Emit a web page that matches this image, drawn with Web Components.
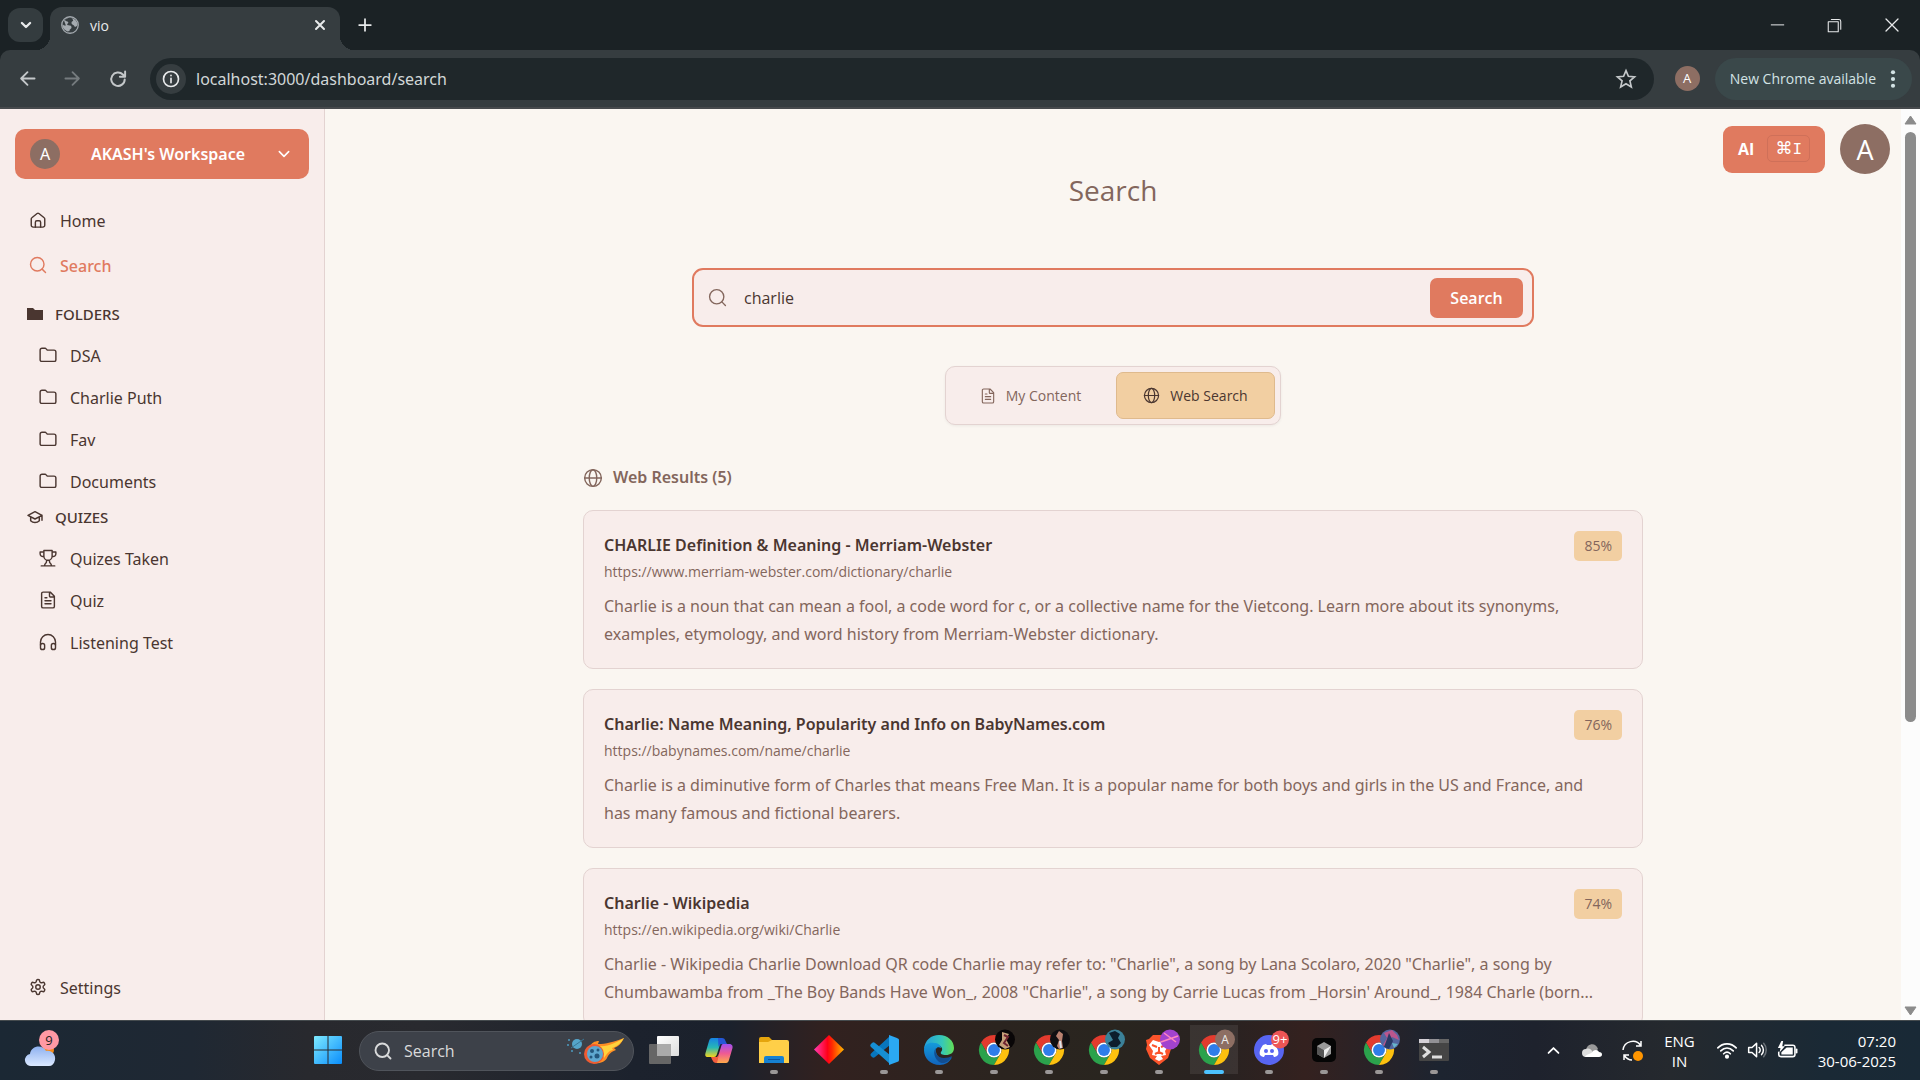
<!DOCTYPE html>
<html lang="en">
<head>
<meta charset="utf-8">
<title>vio</title>
<style>
  html, body { height: 100%; }
  body {
    margin: 0;
    overflow: hidden;
    font-family: "Open Sans", "Noto Sans", sans-serif;
    font-size: 16px;
    --ink: #4a3630;
    --muted: #83665c;
    --accent: #e07a5f;
    --accent-soft: #f2cfa2;
    --panel: #f8edeb;
    --page: #faf6f1;
    --line: #e3d3d1;
    --avatar: #8d6e63;
  }
</style>
</head>
<body>
<vio-desktop>
  <chrome-tabs slot="browser"></chrome-tabs>
  <chrome-toolbar slot="browser" url="localhost:3000/dashboard/search"></chrome-toolbar>
  <vio-sidebar slot="page"></vio-sidebar>
  <vio-search slot="page" query="charlie">
    <vio-result score="85%">
      <span slot="title">CHARLIE Definition &amp; Meaning - Merriam-Webster</span>
      <span slot="url">https://www.merriam-webster.com/dictionary/charlie</span>
      Charlie is a noun that can mean a fool, a code word for c, or a collective name for the Vietcong. Learn more about its synonyms, examples, etymology, and word history from Merriam-Webster dictionary.
    </vio-result>
    <vio-result score="76%">
      <span slot="title">Charlie: Name Meaning, Popularity and Info on BabyNames.com</span>
      <span slot="url">https://babynames.com/name/charlie</span>
      Charlie is a diminutive form of Charles that means Free Man. It is a popular name for both boys and girls in the US and France, and has many famous and fictional bearers.
    </vio-result>
    <vio-result score="74%">
      <span slot="title">Charlie - Wikipedia</span>
      <span slot="url">https://en.wikipedia.org/wiki/Charlie</span>
      Charlie - Wikipedia Charlie Download QR code Charlie may refer to: "Charlie", a song by Lana Scolaro, 2020 "Charlie", a song by Chumbawamba from _The Boy Bands Have Won_, 2008 "Charlie", a song by Carrie Lucas from _Horsin' Around_, 1984 Charle (born...
    </vio-result>
  </vio-search>
  <page-scrollbar slot="page"></page-scrollbar>
  <win-taskbar slot="taskbar"></win-taskbar>
</vio-desktop>

<script>
(function () {
  'use strict';

  function component(selector, style, template, setup) {
    var $template = document.createElement('template');
    $template.innerHTML = '<style>:host,*{box-sizing:border-box}' + style + '</style>' + template;
    customElements.define(selector, class extends HTMLElement {
      connectedCallback() {
        if (this.shadowRoot) return;
        this.attachShadow({ mode: 'open' });
        this.shadowRoot.appendChild(document.importNode($template.content, true));
        if (setup) setup.call(this, this.shadowRoot);
      }
    });
  }

  // 24x24 line icons
  var icons = {
    home: '<path d="M3 10.6a2 2 0 0 1 .8-1.6l7-5.6a2 2 0 0 1 2.4 0l7 5.6a2 2 0 0 1 .8 1.6V19a2.5 2.5 0 0 1-2.5 2.5h-13A2.5 2.5 0 0 1 3 19z"/><path d="M8.5 21.5V15a2 2 0 0 1 2-2h3a2 2 0 0 1 2 2v6.5"/>',
    search: '<circle cx="11" cy="11" r="9"/><path d="m17.5 17.5 4.500 4.500"/>',
    folder: '<path d="M1.500 5.500A2.500 2.500 0 0 1 4 3h4a2 2 0 0 1 1.600.8L11 5.500h9A2.500 2.500 0 0 1 22.500 8v10.500a2 2 0 0 1-2 2h-17a2 2 0 0 1-2-2z"/>',
    folderSolid: '<path fill="currentColor" stroke="none" d="M0 3h9l3 3h12v15H0z"/>',
    cap: '<path d="M12 4 1.500 9.500 12 15l10.500-5.500zM22.500 9.500V17M5.500 12v5.500c3.500 3.600 9.500 3.600 13 0V12"/>',
    trophy: '<path d="M6.500 2h11v7.500a5.500 5.500 0 0 1-11 0zM6.500 4H1.500v2.300A3.700 3.700 0 0 0 6 10M17.500 4h5v2.300a3.700 3.700 0 0 1-4.500 3.700M10 15v2c0 2-2.500 2-2.500 5M14 15v2c0 2 2.500 2 2.500 5M3 22.500h18"/>',
    doc: '<path d="M15 1.500H5.500A2 2 0 0 0 3.500 3.500v17a2 2 0 0 0 2 2h13a2 2 0 0 0 2-2V7zM14 2v5a1 1 0 0 0 1 1h5M8 9h2.500M8 13h8M8 17h8"/>',
    phones: '<path d="M2 16v-4a10 10 0 0 1 20 0v4"/><rect x="2" y="14" width="5.500" height="8" rx="2.500"/><rect x="16.500" y="14" width="5.500" height="8" rx="2.500"/>',
    gear: '<path d="M12.220 2h-.440a2 2 0 0 0-2 2v.180a2 2 0 0 1-1 1.730l-.430.250a2 2 0 0 1-2 0l-.150-.080a2 2 0 0 0-2.730.730l-.220.380a2 2 0 0 0 .730 2.730l.150.100a2 2 0 0 1 1 1.720v.510a2 2 0 0 1-1 1.740l-.150.090a2 2 0 0 0-.730 2.730l.220.380a2 2 0 0 0 2.730.730l.150-.080a2 2 0 0 1 2 0l.430.250a2 2 0 0 1 1 1.730V20a2 2 0 0 0 2 2h.440a2 2 0 0 0 2-2v-.180a2 2 0 0 1 1-1.730l.430-.250a2 2 0 0 1 2 0l.150.080a2 2 0 0 0 2.730-.730l.220-.390a2 2 0 0 0-.730-2.730l-.150-.080a2 2 0 0 1-1-1.740v-.500a2 2 0 0 1 1-1.740l.150-.090a2 2 0 0 0 .730-2.730l-.220-.380a2 2 0 0 0-2.730-.730l-.150.080a2 2 0 0 1-2 0l-.430-.250a2 2 0 0 1-1-1.730V4a2 2 0 0 0-2-2z"/><circle cx="12" cy="12" r="3"/>',
    globe: '<circle cx="12" cy="12" r="10"/><ellipse cx="12" cy="12" rx="4.500" ry="10"/><path d="M2 12h20"/>',
    chevron: '<path d="m5 8.500 7 7 7-7"/>',
    up: '<path d="m5 15.500 7-7 7 7"/>',
    back: '<path d="M22 12H3M12 3l-9 9 9 9"/>',
    forward: '<path d="M2 12h19M12 3l9 9-9 9"/>',
    reload: '<path d="M21 12.500A9 9 0 1 1 18.500 6L21 8.500M21.500 2v7h-7"/>',
    info: '<circle cx="12" cy="12" r="10"/><path d="M12 11v6M12 7v.500"/>',
    star: '<path stroke-linejoin="miter" d="m12 2 2.900 6.800 7.400.6-5.600 4.900 1.700 7.200-6.400-3.800-6.400 3.800 1.700-7.200-5.600-4.900 7.400-.6z"/>',
    cross: '<path d="m4 4 16 16M20 4 4 20"/>',
    plus: '<path d="M12 2v20M2 12h20"/>',
    minus: '<path d="M2 11h20"/>',
    restore: '<rect x="2" y="6" width="16" height="16"/><path d="M7 2.500h12a3 3 0 0 1 3 3V18"/>',
    world: '<circle cx="12" cy="12" r="11"/><path fill="currentColor" stroke="none" d="M11 1.500c-3 1-5 2-5.500 4 1 2 3 .5 4 2.500s-2 2-1 4c2 1 6 0 5.500 3.500-.5 2-3 1.500-2.500 4.500l-3 .5C3 18 1.500 14 2 11c1.500 1 3 2.500 4.500 1.500L4 6zM14 3c4 0 8 4 8 9-1 2-3 3-4 2-1-3-4-2-4-5 0-2 3-2 2-4z"/>',
    dots: '<g fill="currentColor" stroke="none"><circle cx="12" cy="3" r="2.800"/><circle cx="12" cy="12" r="2.800"/><circle cx="12" cy="21" r="2.800"/></g>',
    wifi: '<path d="M1 9.500c6-6.500 16-6.500 22 0M4.500 13c4.500-4.500 10.500-4.500 15 0M8 16.500c2.500-2.300 5.500-2.300 8 0"/><circle cx="12" cy="20" r="1.500" fill="currentColor"/>',
    volume: '<path d="M2 9v6h4l5.500 5V4L6 9zM14.500 9a4 4 0 0 1 0 6M17.500 6.500a8 8 0 0 1 0 11"/><path opacity=".35" d="M20 4a12 12 0 0 1 0 16"/>',
    battery: '<path d="M9 6h9a2.500 2.500 0 0 1 2.500 2.500v8A2.500 2.500 0 0 1 18 19H4.500A2.500 2.500 0 0 1 2 16.500V14M22.500 10.500v4"/><path fill="currentColor" stroke="none" d="M11 8.500h7v8H5V14zM5 1 1 9h3l-1 5 6-7H6l1-6z"/>'
  };

  function svgIcon(name, size, weight) {
    return '<svg aria-hidden="true" width="' + size + '" height="' + size + '" viewBox="0 0 24 24" fill="none" stroke="currentColor" stroke-width="' +
      weight + '" stroke-linecap="round" stroke-linejoin="round">' + icons[name] + '</svg>';
  }

  component('ui-icon', `
    :host { display: block; flex: none; }
    svg { display: block; overflow: visible; }
  `, '', function (root) {
    root.innerHTML += svgIcon(this.getAttribute('name'), this.getAttribute('size') || 20, this.getAttribute('weight') || 1.7);
  });

  component('user-avatar', `
    :host { display: flex; flex: none; align-items: center; justify-content: center; width: 30px; height: 30px; border-radius: 50%; background: var(--avatar); color: #fff; font-size: 16px; line-height: 1; }
  `, '<slot></slot>');

  component('vio-desktop', `
    :host { display: flex; flex-direction: column; height: 100vh; background: #1b2225; }
    .page { display: flex; flex: 1; min-height: 0; overflow: hidden; background: var(--page); }
  `, '<slot name="browser"></slot><main class="page"><slot name="page"></slot></main><slot name="taskbar"></slot>');

  component('chrome-tabs', `
    :host { display: flex; flex: none; align-items: center; height: 50px; padding-left: 8px; background: #1b2225; color: #e8eaeb; }
    button { display: flex; align-items: center; justify-content: center; border: 0; padding: 0; background: none; color: inherit; font: inherit; }
    .search { width: 35px; height: 34px; border-radius: 12px; background: #343c3f; }
    .tab { display: flex; align-items: center; gap: 11px; align-self: flex-end; position: relative; width: 290px; height: 43px; margin-left: 7px; padding: 0 14px 7px 11px; border-radius: 12px 12px 0 0; background: #363d40; font-size: 14px; }
    .tab::before, .tab::after { content: ""; position: absolute; bottom: 0; width: 14px; height: 14px; }
    .tab::before { right: 100%; background: radial-gradient(circle at 0 0, transparent 14px, #363d40 14px); }
    .tab::after { left: 100%; background: radial-gradient(circle at 100% 0, transparent 14px, #363d40 14px); }
    .tab span { flex: 1; }
    .tab ui-icon { color: #a5abb0; }
    .tab button ui-icon { color: #e8eaeb; }
    .new { width: 34px; margin-left: 8px; }
    .window { display: flex; align-self: stretch; margin-left: auto; }
    .window button { width: 57px; }
  `, `
    <button class="search" aria-label="Search tabs"><ui-icon name="chevron" size="14" weight="4"></ui-icon></button>
    <div class="tab">
      <ui-icon name="world" size="18"></ui-icon><span>vio</span>
      <button aria-label="Close tab"><ui-icon name="cross" size="12" weight="4"></ui-icon></button>
    </div>
    <button class="new" aria-label="New tab"><ui-icon name="plus" size="14" weight="3"></ui-icon></button>
    <div class="window">
      <button aria-label="Minimize"><ui-icon name="minus" size="15" weight="1.6"></ui-icon></button>
      <button aria-label="Restore"><ui-icon name="restore" size="15" weight="1.7"></ui-icon></button>
      <button aria-label="Close"><ui-icon name="cross" size="18" weight="1.7"></ui-icon></button>
    </div>
  `);

  component('chrome-toolbar', `
    :host { display: flex; flex: none; align-items: center; height: 59px; padding: 0 8px 0 5px; background: #363d40; border-bottom: 2px solid #474a4d; border-radius: 10px 10px 0 0; color: #c4c8ca; }
    button { display: flex; align-items: center; justify-content: center; border: 0; padding: 0; background: none; color: inherit; font: inherit; }
    .nav { width: 45px; height: 40px; }
    .nav[disabled] { color: #757b7e; }
    .address { display: flex; flex: 1; align-items: center; height: 42px; margin-left: 10px; padding: 0 18px 0 6px; border-radius: 21px; background: #1f272a; }
    .info { width: 30px; height: 30px; border-radius: 50%; background: #363d40; color: #e8eaeb; }
    input { flex: 1; min-width: 0; margin-left: 8px; padding: 1px 2px 0; border: 0; outline: 0; background: none; color: #d2d7d8; font: 16px "Noto Sans", sans-serif; }
    user-avatar { width: 25px; height: 25px; margin: 0 15px 0 21px; font-size: 13px; }
    .update { gap: 8px; height: 42px; padding: 0 10px 0 15px; border-radius: 21px; background: #3a484a; color: #d3e3e5; font-size: 14px; }
  `, `
    <button class="nav" aria-label="Back"><ui-icon name="back" size="17" weight="2.6"></ui-icon></button>
    <button class="nav" aria-label="Forward" disabled><ui-icon name="forward" size="17" weight="2.6"></ui-icon></button>
    <button class="nav" aria-label="Reload"><ui-icon name="reload" size="18" weight="2.6"></ui-icon></button>
    <div class="address">
      <button class="info" aria-label="Site information"><ui-icon name="info" size="18" weight="2.2"></ui-icon></button>
      <input aria-label="Address bar" spellcheck="false">
      <button aria-label="Bookmark this tab"><ui-icon name="star" size="20" weight="2"></ui-icon></button>
    </div>
    <user-avatar>A</user-avatar>
    <button class="update">New Chrome available <ui-icon name="dots" size="18"></ui-icon></button>
  `, function (root) {
    root.querySelector('input').value = this.getAttribute('url');
  });

  component('side-link', `
    :host { display: block; }
    a { display: flex; align-items: center; gap: 13px; color: inherit; text-decoration: none; line-height: 42px; }
    svg { display: block; flex: none; margin-bottom: 3px; overflow: visible; }
    :host([current]) { color: var(--accent); font-weight: 500; }
  `, '<a href="#"><slot></slot></a>', function (root) {
    root.querySelector('a').insertAdjacentHTML('afterbegin', svgIcon(this.getAttribute('icon'), 18, 1.9));
  });

  component('vio-sidebar', `
    :host { display: flex; flex: none; flex-direction: column; width: 325px; padding: 20px 15px 11px; background: var(--panel); border-right: 1px solid var(--line); color: var(--ink); font-family: "Noto Sans", sans-serif; }
    .workspace { display: flex; flex: none; align-items: center; height: 50px; padding: 0 17px 0 15px; border: 0; border-radius: 10px; background: var(--accent); color: #fff; font: inherit; font-weight: 600; }
    .workspace span { flex: 1; text-align: center; }
    user-avatar { font-weight: 400; }
    nav { display: flex; flex: 1; flex-direction: column; padding: 21px 12px 0; }
    h2 { display: flex; align-items: center; gap: 12px; height: 28px; margin: 0 0 7px; font-size: 15px; font-weight: 500; }
    .top { display: grid; gap: 3px; margin-bottom: 13px; padding: 0 2px; }
    .group { padding: 0 12px; }
    .settings { margin-top: auto; padding: 0 2px; }
  `, `
    <button class="workspace"><user-avatar>A</user-avatar><span>AKASH's Workspace</span><ui-icon name="chevron" size="16" weight="2.4"></ui-icon></button>
    <nav>
      <div class="top">
        <side-link icon="home">Home</side-link>
        <side-link icon="search" current>Search</side-link>
      </div>
      <h2><ui-icon name="folderSolid" size="16"></ui-icon>FOLDERS</h2>
      <div class="group">
        <side-link icon="folder">DSA</side-link>
        <side-link icon="folder">Charlie Puth</side-link>
        <side-link icon="folder">Fav</side-link>
        <side-link icon="folder">Documents</side-link>
      </div>
      <h2><ui-icon name="cap" size="16" weight="2.2"></ui-icon>QUIZES</h2>
      <div class="group">
        <side-link icon="trophy">Quizes Taken</side-link>
        <side-link icon="doc">Quiz</side-link>
        <side-link icon="phones">Listening Test</side-link>
      </div>
      <side-link class="settings" icon="gear">Settings</side-link>
    </nav>
  `);

  component('vio-search', `
    :host { display: flex; flex: 1; flex-direction: column; align-items: center; min-width: 0; color: var(--muted); }
    header, form, .switch, section { flex: none; }
    button { border: 0; font: inherit; }
    header { display: grid; grid-template-columns: 1fr auto 1fr; align-self: stretch; padding: 15px 11px 0; }
    h1 { grid-column: 2; margin: 0; padding-top: 46px; font-size: 28px; font-weight: 400; line-height: 40px; }
    .actions { display: flex; align-items: center; justify-self: end; gap: 15px; height: 50px; }
    .ai { display: flex; align-items: center; gap: 13px; height: 47px; padding: 0 15px; border-radius: 9px; background: var(--accent); color: #fff; font-size: 16px; font-weight: 700; }
    kbd { height: 27px; margin-bottom: 2px; padding: 0 7px; border: 1px solid #cf7059; border-radius: 5px; font: 16px/24px "Liberation Mono", monospace; }
    kbd span { font-family: "DejaVu Sans", sans-serif; font-size: 17px; }
    .actions user-avatar { width: 50px; height: 50px; font-size: 27px; }
    form { display: flex; align-items: center; width: min(842px, 90%); height: 59px; margin-top: 58px; padding: 0 9px 0 14px; border: 2px solid var(--accent); border-radius: 11px; background: var(--panel); }
    input { flex: 1; min-width: 0; margin: 0 17px; padding: 0; border: 0; outline: 0; background: none; color: var(--ink); font: inherit; }
    form button { width: 93px; height: 40px; padding: 0; border-radius: 7px; background: var(--accent); color: #fff; font-weight: 600; }
    .switch { display: flex; height: 59px; margin-top: 39px; padding: 5px; border: 1px solid var(--line); border-radius: 10px; background: var(--panel); box-shadow: 0 1px 3px rgba(0, 0, 0, .06); }
    .switch button { display: flex; align-items: center; justify-content: center; gap: 10px; width: 159px; padding: 0 12px; border: 1px solid transparent; border-radius: 7px; background: none; color: var(--muted); font-size: 14px; }
    .switch button[aria-pressed="true"] { border-color: #dfba8d; background: var(--accent-soft); color: var(--ink); }
    .switch button + button { margin-left: 6px; }
    section { display: flex; flex-direction: column; gap: 20px; width: min(1060px, 90%); margin-top: 40px; }
    h2 { display: flex; align-items: center; gap: 10px; margin: 0; font: 600 16px/25px "Noto Sans", sans-serif; }
  `, `
    <header>
      <h1>Search</h1>
      <div class="actions"><button class="ai">AI <kbd><span>⌘</span>I</kbd></button><user-avatar>A</user-avatar></div>
    </header>
    <form>
      <ui-icon name="search" size="19"></ui-icon>
      <input type="text" aria-label="Search">
      <button type="button">Search</button>
    </form>
    <div class="switch">
      <button aria-pressed="false"><ui-icon name="doc" size="16"></ui-icon>My Content</button>
      <button aria-pressed="true"><ui-icon name="globe" size="17"></ui-icon>Web Search</button>
    </div>
    <section>
      <h2><ui-icon name="globe" size="20"></ui-icon>Web Results (5)</h2>
      <slot></slot>
    </section>
  `, function (root) {
    root.querySelector('input').value = this.getAttribute('query');
  });

  component('vio-result', `
    :host { display: grid; grid-template-columns: 1fr auto; padding: 20px; border: 1px solid var(--line); border-radius: 10px; background: var(--panel); }
    h3 { margin: 0; color: var(--ink); font: 600 16px/28px "Noto Sans", sans-serif; }
    a { display: block; color: inherit; font-size: 14px; line-height: 25px; text-decoration: none; }
    p { display: -webkit-box; grid-column: 1 / 3; margin: 8px 12px 0 0; overflow: hidden; font: 16px/28px "Noto Sans", sans-serif; -webkit-box-orient: vertical; -webkit-line-clamp: 2; }
    .score { align-self: start; padding: 0 10px; border-radius: 5px; background: var(--accent-soft); font-size: 14px; line-height: 30px; }
  `, `
    <div><h3><slot name="title"></slot></h3><a href="#"><slot name="url"></slot></a></div>
    <span class="score"></span>
    <p><slot></slot></p>
  `, function (root) {
    root.querySelector('.score').textContent = this.getAttribute('score');
  });

  component('page-scrollbar', `
    :host { display: flex; flex: none; flex-direction: column; align-items: center; width: 19px; padding: 6px 0 4px; background: #fcfcfc; }
    .track { flex: 1; width: 11px; margin: 7px 0; }
    .thumb { height: 68%; border-radius: 6px; background: #8b8b8b; }
    svg { fill: #8b8b8b; stroke: #8b8b8b; stroke-linejoin: round; }
  `, `
    <svg width="13" height="10"><path d="M6.500 1 12 9H1z"/></svg>
    <div class="track"><div class="thumb"></div></div>
    <svg width="13" height="10"><path d="M6.500 9 12 1H1z"/></svg>
  `);

  // Taskbar pictures, each on a 30x30 box
  function chromeLogo(badge) {
    return '<g transform="scale(.625)"><path fill="#e33b2e" d="M24 12h20.800A24 24 0 0 0 3.200 12l10.400 18A12 12 0 0 1 24 12z"/>' +
      '<path fill="#2ba24c" d="M13.600 30 3.200 12A24 24 0 0 0 24 48l10.400-18a12 12 0 0 1-20.800 0z"/>' +
      '<path fill="#fdc10f" d="M34.400 30 24 48a24 24 0 0 0 20.800-36H24a12 12 0 0 1 10.400 18z"/>' +
      '<circle cx="24" cy="24" r="12" fill="#fff"/><circle cx="24" cy="24" r="9.500" fill="#2f7de9"/></g>' + badge;
  }
  var pictures = {
    start: '<defs><linearGradient id="w" x2="1" y2="1"><stop stop-color="#7eeaff"/><stop offset="1" stop-color="#0a8dfb"/></linearGradient></defs><path fill="url(#w)" d="M1 2a1 1 0 0 1 1-1h12.500v13.500H1zM15.500 1H28a1 1 0 0 1 1 1v12.500H15.500zM1 15.500h13.500V29H2a1 1 0 0 1-1-1zM15.500 15.500H29V28a1 1 0 0 1-1 1H15.500z"/>',
    tasks: '<defs><linearGradient id="t" x2="1" y2="1"><stop stop-color="#fff"/><stop offset="1" stop-color="#ddd"/></linearGradient></defs><rect y="9" width="22" height="20" rx="1" fill="#666"/><rect x="8" y="1" width="22" height="20" rx="1" fill="url(#t)"/><path fill="#aaa" d="M8 9h14v12H8z"/>',
    copilot: '<defs><linearGradient id="c1" x2="0" y2="1"><stop stop-color="#1683e5"/><stop offset=".5" stop-color="#27b7b5"/><stop offset="1" stop-color="#f4d51c"/></linearGradient><linearGradient id="c2" x2="0" y2="1"><stop stop-color="#a04ff0"/><stop offset=".5" stop-color="#ef5b93"/><stop offset="1" stop-color="#ffab4a"/></linearGradient></defs><path fill="url(#c1)" d="M8 3h10l-5 16c-1 3-2 3-4 3H4c-3 0-3-2-2.500-4L5 6c.5-2 1.500-3 3-3z"/><path fill="#2457d6" d="M14 3h4c2 0 3 1 3.500 3L23 9h-5c-2 0-3 1-3.500 3z"/><path fill="url(#c2)" d="M19 9h6c3 0 4 2 3.500 4L25 25c-.5 2-1.500 3-3 3H12l5-16c.5-2 1-3 2-3z"/><path fill="#f25d3d" d="M7 22h6l2-3-2 9c-3 0-4-1-6-6z"/>',
    files: '<path fill="#e5a50d" d="M0 4a2 2 0 0 1 2-2h8l3 3v5H0z"/><path fill="#ffcf48" d="M0 7h9l4-2h15a2 2 0 0 1 2 2v21H0z"/><path fill="#1681d2" d="M5 28v-5a2 2 0 0 1 2-2h16a2 2 0 0 1 2 2v5z"/><path fill="#0d569f" d="M9 24h12v1H9z"/>',
    diamond: '<defs><linearGradient id="d"><stop stop-color="#ff3cb5"/><stop offset=".45" stop-color="#ff0018"/><stop offset=".6" stop-color="#ff2a00"/><stop offset="1" stop-color="#ffb700"/></linearGradient></defs><path fill="url(#d)" d="M15 0l15 14.500L15 29 0 14.500z"/>',
    code: '<path fill="#0876bd" d="M21 1 2.500 18c-1 1-1.500 2-.5 3l1 1c1 1 2 1 3 0L21 10z"/><path fill="#168fd4" d="m2 9 1-1c1-1 2-1 3 0l15 12v9L2 12c-1-1-1-2 0-3z"/><path fill="#2ba8f3" d="M20 0l8 3c1 .5 2 1 2 2v20c0 1-1 2-2 2l-8 3z"/>',
    edge: '<defs><linearGradient id="e1" x2="1"><stop stop-color="#259fdc"/><stop offset=".6" stop-color="#35c7ba"/><stop offset="1" stop-color="#62df55"/></linearGradient><linearGradient id="e2" x2="0" y2="1"><stop stop-color="#149bdb"/><stop offset="1" stop-color="#1163bc"/></linearGradient></defs><path fill="url(#e1)" d="M0 14C1 5 7 0 15 0c9 0 15 6 15 13 0 5-4 7-8 7-4 0-6-1-5-3 3-3 0-7-4-7C7 8 2 10 0 14z"/><path fill="url(#e2)" d="M0 15C0 9 6 7 10 8c4 0 7 2 7 5-3-2-6 0-5 4 1 5 5 7 10 7 3 0 5-1 6-2-2 5-7 8-12 8C6 30 0 23 0 15z"/><path fill="#124d91" d="M12 13c-2 5 2 10 8 10 3 0 6-1 8-2-3 7-10 9-14 5-4-4-5-10-2-13z"/>',
    chrome1: chromeLogo('<circle cx="26" cy="4.500" r="10" fill="#090607"/><path d="m23-3 7 2-3 5 4 8-5 2-6-4 3-5z" fill="#c6a07a"/><path d="m25 0 4 2-4 6 4 3" stroke="#702430" stroke-width="2" fill="none"/>'),
    chrome2: chromeLogo('<circle cx="26" cy="4.500" r="10" fill="#100f12"/><path d="m25-4 4 3-1 7 1 7-4 1-2-3 2-6-3-4z" fill="#b98170"/><path d="m26 6 1 7" stroke="#dee5ed" stroke-width="2"/>'),
    chrome3: chromeLogo('<circle cx="26" cy="4.500" r="10" fill="#3b8198"/><path d="m20-2 6-2 5 3-2 4 3 5-4 4h-6l-3-4 5-3z" fill="#0c1d2c"/>'),
    brave: '<g transform="translate(2)"><path fill="#fb542b" d="m7 0-4 4-3 1 1 5-1 4 4 9 9 7 9-7 3-9-1-4 1-5-3-1-4-4z"/><path fill="#fff" d="m7 5 6 2 6-2 4 5-4 6 1 4-5 1 2 3-4 2-4-2 2-3-5-1 1-4-4-6z"/><path stroke="#fb542b" stroke-width="2" fill="none" d="m6 10 5 2M20 10l-5 2M13 12v7M9 19l4-2 4 2"/></g><circle cx="26" cy="4.500" r="10" fill="#a243cf"/><path stroke="#ff87bf" stroke-width="1.500" d="m17 7 17-6M20-2l12 9"/>',
    chrome4: chromeLogo('<circle cx="26" cy="4.500" r="10" fill="#8d6e63"/><text x="26" y="9" fill="#eee" font-size="12" text-anchor="middle">A</text>'),
    discord: '<circle cx="15" cy="15" r="15" fill="#5865f2"/><path fill="#fff" d="M9 10c2-1 3-1 3-1l1 1h4l1-1s1 0 3 1c3 4 4 7 3 10-2 2-4 2-4 2l-1-2h-8l-1 2s-2 0-4-2c-1-3 0-6 3-10z"/><circle cx="12" cy="16" r="2" fill="#5865f2"/><circle cx="18" cy="16" r="2" fill="#5865f2"/><circle cx="26" cy="4.500" r="9" fill="#ed5555"/><text x="26" y="9" fill="#fff" font-size="13" text-anchor="middle">9+</text>',
    cursor: '<rect x="3" y="3" width="24" height="24" rx="5" fill="#050505"/><path fill="#999" d="m15 7 7 4v8l-7 4-7-4v-8z"/><path fill="#eee" d="m8 11 7 4 7-4-7 12v-7z"/><path fill="#555" d="m8 11 7 4v8l-7-4z"/>',
    chrome5: chromeLogo('<circle cx="26" cy="4.500" r="10" fill="#5466a0"/><path d="m20-2 8-3 5 5 2 5-7-3-5 10-4-2 4-7z" fill="#bb568d"/><path d="m25-2 4 8-4 8-5-2 3-8z" fill="#293a66"/><path d="m28 8 6 1-4 4z" fill="#67b6cc"/>'),
    terminal: '<rect y="4" width="30" height="22" rx="1" fill="#454545"/><path fill="#d4d0d6" d="M0 4h10v4H0z"/><path fill="#929195" d="M10 4h10v4H10z"/><path fill="#666" d="M20 4h10v4H20z"/><path fill="none" stroke="#dedede" stroke-width="3" d="m4 12 6 5-6 5M13 22h10"/>'
  };

  component('task-app', `
    :host { display: flex; flex: none; flex-direction: column; align-items: center; width: 55px; height: 59px; padding-top: 14px; }
    button { display: block; padding: 0; border: 0; background: none; font: inherit; }
    svg { display: block; overflow: visible; }
    :host([running])::after { content: ""; width: 8px; height: 4px; margin-top: 5px; border-radius: 2px; background: #9a9797; }
    :host([active]) { background: linear-gradient(#ffffff14, #ffffff14) 50% 4px / 48px 49px no-repeat; }
    :host([active])::after { width: 20px; background: #4cc2ff; }
  `, '<button></button>', function (root) {
    var name = this.getAttribute('name');
    var $button = root.querySelector('button');
    $button.setAttribute('aria-label', name);
    $button.innerHTML = '<svg width="30" height="30" viewBox="0 0 30 30">' + pictures[name] + '</svg>';
  });

  component('win-taskbar', `
    :host { display: flex; flex: none; align-items: center; height: 60px; padding-right: 24px; color: #fff; border-top: 1px solid #454b4e;
      background: linear-gradient(90deg, #1b2834, #1f2833 10%, #28292e 16%, #292a2f 22%, #1c222d 33%, #1b212c 38%, #32211f 43%, #2b241f 52%, #29251f 58%, #292221 64%, #34211f 68%, #1d2430 75%, #1e222d 80%, #25292e 87%, #1a2935 95%, #192936); }
    button { display: flex; align-items: center; border: 0; background: none; color: inherit; font: inherit; }
    svg { overflow: visible; }
    .weather { width: 300px; padding: 0 24px; }
    .search { width: 275px; height: 40px; margin: 0 2px 0 4px; padding: 0 8px 0 14px; gap: 12px; border: 1px solid #50545b; border-radius: 20px; background: #3d4149; color: #d9dadb; }
    .search span { flex: 1; text-align: left; }
    .tray { display: flex; align-items: center; margin-left: auto; font-size: 15px; line-height: 20px; }
    .status { display: flex; align-items: center; gap: 20px; }
    .lang { margin: 0 12px 0 20px; text-align: center; }
    .power { display: flex; gap: 10px; padding-left: 10px; }
    .clock { margin-left: 20px; text-align: right; }
  `, `
    <button class="weather" aria-label="Weather">
      <svg width="34" height="36" viewBox="0 0 34 36">
        <defs><linearGradient id="cl" x2="0" y2="1"><stop stop-color="#8eb1f0"/><stop offset="1" stop-color="#dbe9ff"/></linearGradient></defs>
        <circle cx="24" cy="17" r="6" fill="#f58a18"/>
        <path fill="url(#cl)" d="M8 33a6 6 0 0 1-2-12c1-9 13-10 16-3 6-1 10 4 9 9-1 4-3 6-6 6z"/>
        <circle cx="25" cy="7" r="10" fill="#ff99a4"/>
        <text x="25" y="12" fill="#222" font-size="13" text-anchor="middle">9</text>
      </svg>
    </button>
    <task-app name="start"></task-app>
    <button class="search">
      <ui-icon name="search" size="18" weight="2.500"></ui-icon><span>Search</span>
      <svg width="58" height="26" viewBox="0 0 58 26" aria-hidden="true">
        <circle cx="10" cy="6" r="5" fill="#55a5ca"/><path d="m4 10 13-9" stroke="#3a7796"/>
        <g fill="#4c9bc0"><circle cx="2" cy="2" r="1"/><circle cx="1" cy="7" r="1"/><circle cx="5" cy="13" r="1"/><circle cx="13" cy="15" r="1"/></g>
        <path fill="#ff8f24" d="M22 9c3-4 5-6 10-6l-1 3c8 0 15-2 26-6-3 6-5 8-10 10l2 2c-5 2-7 4-9 8-3 6-16 8-19 1z"/>
        <path fill="#ffd33d" d="M32 8c9 1 16-3 25-8-3 5-6 8-12 10l1 2c-5 1-6 4-9 8z"/>
        <circle cx="27" cy="16" r="10" fill="#ee5b32"/><circle cx="28" cy="16" r="8" fill="#5fa8d1"/>
        <g fill="#24577e"><circle cx="25" cy="13" r="2"/><circle cx="31" cy="12" r="1.500"/><circle cx="30" cy="18" r="2.500"/><circle cx="24" cy="19" r="1.500"/></g>
      </svg>
    </button>
    <task-app name="tasks"></task-app>
    <task-app name="copilot"></task-app>
    <task-app name="files" running></task-app>
    <task-app name="diamond"></task-app>
    <task-app name="code" running></task-app>
    <task-app name="edge" running></task-app>
    <task-app name="chrome1" running></task-app>
    <task-app name="chrome2" running></task-app>
    <task-app name="chrome3" running></task-app>
    <task-app name="brave" running></task-app>
    <task-app name="chrome4" running active></task-app>
    <task-app name="discord" running></task-app>
    <task-app name="cursor" running></task-app>
    <task-app name="chrome5" running></task-app>
    <task-app name="terminal" running></task-app>
    <div class="tray">
      <div class="status">
        <ui-icon name="up" size="17" weight="2.500"></ui-icon>
        <svg width="20" height="14" viewBox="0 0 20 14"><path fill="#999" d="M4 6c1-7 10-8 12-1l-6 6z"/><path fill="#ddd" d="M4 13a4 4 0 0 1 0-8c3-1 5 0 6 2l4 6z"/><path fill="#fff" d="M3 13c2-4 6-2 8-6 3-2 5-1 6 1 4 0 4 5 0 5z"/></svg>
        <svg width="22" height="22" viewBox="0 0 22 22" fill="none" stroke="#fff" stroke-width="1.500"><path d="M1 10C2 1 14-2 19 6M19 1v5h-5M10 20c-4 0-6-2-8-5M7 15H2v5"/><circle cx="16" cy="16" r="5" fill="#ff9500" stroke="none"/></svg>
      </div>
      <div class="lang">ENG<br>IN</div>
      <div class="power">
        <ui-icon name="wifi" size="20" weight="2"></ui-icon>
        <ui-icon name="volume" size="20" weight="1.8"></ui-icon>
        <ui-icon name="battery" size="21" weight="1.8"></ui-icon>
      </div>
      <div class="clock">07:20<br>30-06-2025</div>
    </div>
  `);
}());
</script>
</body>
</html>
